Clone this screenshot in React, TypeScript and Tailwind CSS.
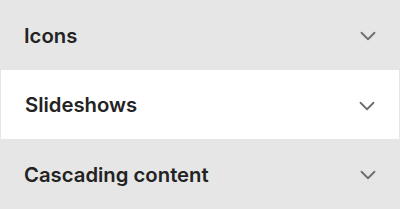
import { ChevronDown } from "lucide-react"

const items = [
  { label: "Icons", open: false },
  { label: "Slideshows", open: true },
  { label: "Cascading content", open: false },
]

export default function App() {
  return (
    <div className="w-[400px] h-[209px] bg-[#e6e6e6] font-['Inter',sans-serif] text-[#232323]">
      {items.map((item) => (
        <div
          key={item.label}
          className={`flex items-center justify-between pl-6 pr-[19px] pt-[2px] ${
            item.open ? "mx-[1px] h-[69px] bg-white" : "h-[70px]"
          }`}
        >
          <span className="text-[20.3px] font-semibold">{item.label}</span>
          <ChevronDown className="h-[26px] w-[26px] text-[#6e6e6e]" strokeWidth={1.7} />
        </div>
      ))}
    </div>
  )
}
